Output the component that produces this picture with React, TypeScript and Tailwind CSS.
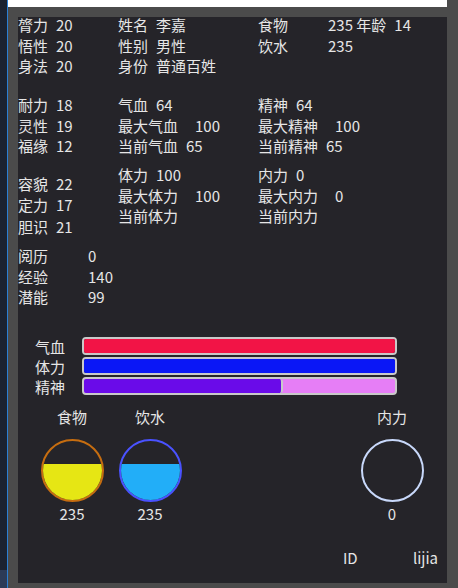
import React from "react";

const font = { fontFamily: '"Noto Sans CJK SC", "Noto Sans", sans-serif' };

function Stat({ label, value, gap = "ml-[8px]" }: { label: string; value?: string; gap?: string }) {
  return (
    <div className="whitespace-nowrap">
      <span>{label}</span>
      {value !== undefined && <span className={gap}>{value}</span>}
    </div>
  );
}

function Bar({ label, fill, rest, pct }: { label: string; fill: string; rest?: string; pct: number }) {
  return (
    <div className="flex h-[20px] items-start">
      <div className="w-[64px] text-center leading-[20px]">{label}</div>
      <div className={`flex h-[18px] w-[315px] overflow-hidden rounded-[4px] border-2 border-[#c9c9c9] ${rest ?? ""}`}>
        <div
          className={`h-full ${fill} ${pct < 100 ? "border-r-2 border-[#c9c9c9] rounded-r-[3px]" : ""}`}
          style={{ width: `${pct}%` }}
        />
      </div>
    </div>
  );
}

function Gauge({ label, value, ring, fill, level }: { label: string; value: string; ring: string; fill: string; level: number }) {
  return (
    <div className="flex w-[64px] flex-col items-center">
      <div className="leading-[20.5px]">{label}</div>
      <div className={`mt-[12px] flex h-[63px] w-[63px] flex-col justify-end overflow-hidden rounded-full border-2 ${ring}`}>
        <div className={fill} style={{ height: `${level}px` }} />
      </div>
      <div className="mt-[2px] leading-[20.5px]">{value}</div>
    </div>
  );
}

export default function App() {
  return (
    <div className="flex h-[588px] w-[458px] overflow-hidden text-[15px] text-[#e6e6e6]" style={font}>
      <div className="flex w-[7px] flex-col bg-[#1b2230]">
        <div className="flex-1" />
        <div className="h-[18px] bg-[#2c3b57]" />
      </div>
      <div className="w-px bg-[#2b7fd4]" />
      <div className="flex flex-1 flex-col bg-[#4b4b4b]">
        <div className="mr-[11px] h-[7px] bg-white" />
        <div className="ml-[10px] mr-[11px] mt-[10px] h-[566px] bg-[#252429]">
          <div className="-mt-[2px] leading-[20.5px]">
            {/* basic info */}
            <div className="flex">
              <div className="w-[100px]">
                <Stat label="膂力" value="20" />
                <Stat label="悟性" value="20" />
                <Stat label="身法" value="20" />
              </div>
              <div className="w-[140px]">
                <Stat label="姓名" value="李嘉" />
                <Stat label="性别" value="男性" />
                <Stat label="身份" value="普通百姓" />
              </div>
              <div>
                <div className="flex">
                  <span className="w-[70px]">食物</span>
                  <span>235 年龄</span>
                  <span className="ml-[8px]">14</span>
                </div>
                <div className="flex">
                  <span className="w-[70px]">饮水</span>
                  <span>235</span>
                </div>
              </div>
            </div>

            <div className="mt-[18.5px] flex">
              <div className="w-[100px]">
                <Stat label="耐力" value="18" />
                <Stat label="灵性" value="19" />
                <Stat label="福缘" value="12" />
              </div>
              <div className="w-[140px]">
                <Stat label="气血" value="64" />
                <Stat label="最大气血" value="100" gap="ml-[17px]" />
                <Stat label="当前气血" value="65" />
              </div>
              <div>
                <Stat label="精神" value="64" />
                <Stat label="最大精神" value="100" gap="ml-[17px]" />
                <Stat label="当前精神" value="65" />
              </div>
            </div>

            <div className="mt-[8.5px] flex items-start">
              <div className="w-[100px] pt-[7.5px] leading-[21.5px]">
                <Stat label="容貌" value="22" />
                <Stat label="定力" value="17" />
                <Stat label="胆识" value="21" />
              </div>
              <div className="w-[140px]">
                <Stat label="体力" value="100" />
                <Stat label="最大体力" value="100" gap="ml-[17px]" />
                <Stat label="当前体力" />
              </div>
              <div>
                <Stat label="内力" value="0" />
                <Stat label="最大内力" value="0" gap="ml-[17px]" />
                <Stat label="当前内力" />
              </div>
            </div>

            <div className="mt-[9px]">
              {[
                ["阅历", "0"],
                ["经验", "140"],
                ["潜能", "99"],
              ].map(([k, v]) => (
                <div key={k} className="flex">
                  <span className="w-[70px]">{k}</span>
                  <span>{v}</span>
                </div>
              ))}
            </div>
          </div>

          <div className="mt-[29.5px]">
            <Bar label="气血" fill="bg-[#f21446]" pct={100} />
            <Bar label="体力" fill="bg-[#0a17f6]" pct={100} />
            <Bar label="精神" fill="bg-[#6a0be9]" rest="bg-[#e67ef6]" pct={64} />
          </div>

          <div className="mt-[9.5px] flex justify-between pl-[22px] pr-[23px]">
            <div className="flex gap-[14px]">
              <Gauge label="食物" value="235" ring="border-[#c66d10]" fill="bg-[#e6e614]" level={36} />
              <Gauge label="饮水" value="235" ring="border-[#4a52ff]" fill="bg-[#22aef8]" level={36} />
            </div>
            <Gauge label="内力" value="0" ring="border-[#c8d8fa]" fill="bg-transparent" level={0} />
          </div>

          <div className="mt-[23.5px] flex justify-end pr-[9px] leading-[20.5px]">
            <span className="w-[70px]">ID</span>
            <span>lijia</span>
          </div>
        </div>
      </div>
    </div>
  );
}
